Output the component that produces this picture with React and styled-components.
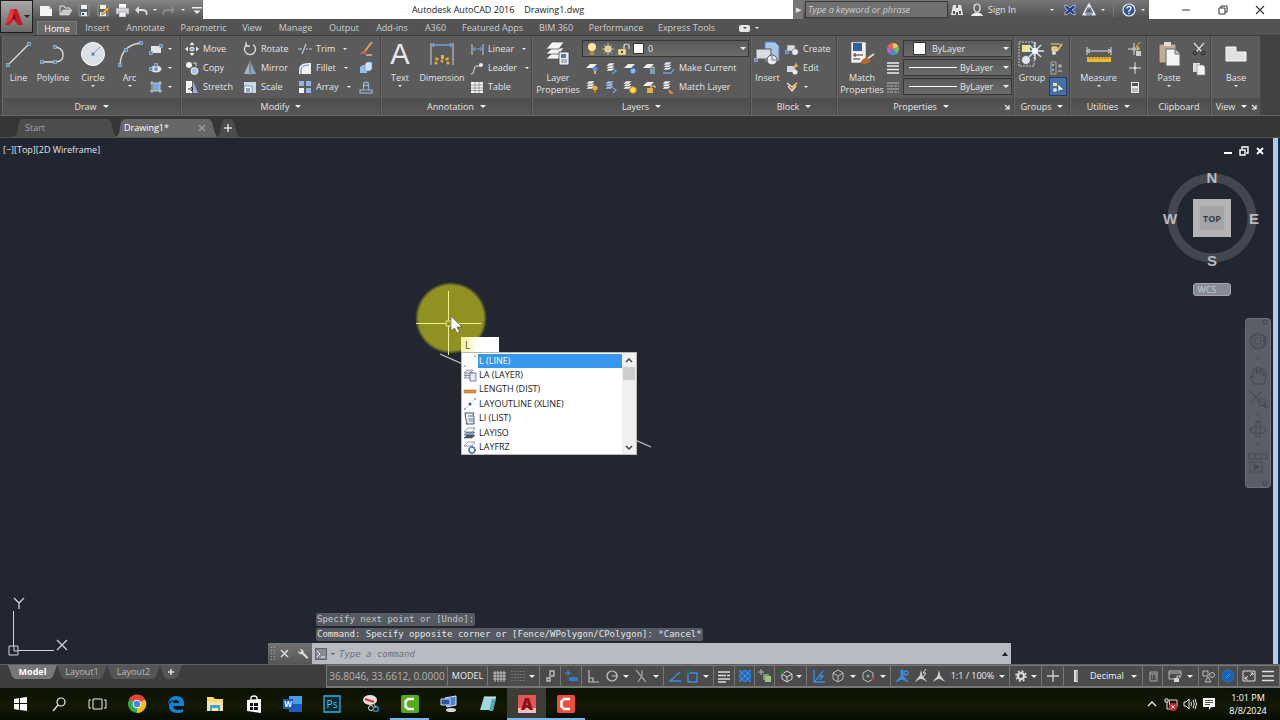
import styled, { createGlobalStyle, css } from "styled-components";

const ui = `"Open Sans", "Noto Sans", sans-serif`;
const mono = `"DejaVu Sans Mono", monospace`;

const GlobalStyle = createGlobalStyle`
    * {
        box-sizing: border-box;
    }

    body {
        margin: 0;
        background: #212631;
        font-family: ${ui};
        font-size: 10px;
        line-height: 12px;
        color: #e4e4e4;
        overflow: hidden;
    }

    button, input, select {
        font: inherit;
        color: inherit;
        border: 0;
        padding: 0;
        margin: 0;
        background: none;
        border-radius: 0;
    }

    svg {
        display: block;
        flex: none;
    }
`

const Page = styled.div`
    display: flex;
    flex-direction: column;
    height: 100vh;
`

/* ---------- icons ---------- */

const node = (x, y) => <rect x={x - 1.5} y={y - 1.5} width="3" height="3" fill="#5f7fb0" stroke="#9db9e2" strokeWidth=".7" />;
const sheets = (x, y, c = "#f2f2f2") => (
    <g fill={c} stroke="#4a4a4a" strokeWidth=".5">
        <path d={`M${x} ${y + 8}l3-3h6l-3 3z`} />
        <path d={`M${x} ${y + 5.5}l3-3h6l-3 3z`} />
        <path d={`M${x} ${y + 3}l3-3h6l-3 3z`} />
    </g>
);

const icons = {
    fresh: <><path d="M1 3h9l3 3v7H1z" fill="#f4f4f4" /><path d="M10 3v3h3" fill="#bbb" /></>,
    open: <><path d="M2 12V3h4l1 2h5v2" fill="none" stroke="#e4e4e4" /><path d="M2 12l3-5h9l-3 5z" fill="#c9c9c9" stroke="#eee" strokeWidth=".6" /></>,
    save: <><path d="M2 2h10v11H2z" fill="#59636e" stroke="#8d969f" /><path d="M4 2h6v4H4z" fill="#f2f2f2" /><path d="M4 9h6v4H4z" fill="#e4e6e8" /><path d="M5 10h2v2H5z" fill="#444" /></>,
    saveAs: <><path d="M2 2h10v11H2z" fill="#59636e" stroke="#8d969f" /><path d="M4 2h6v4H4z" fill="#f2f2f2" /><path d="M4 9h6v4H4z" fill="#e4e6e8" /><path d="M5 11l6-7 2 2-6 6z" fill="#f1b23b" stroke="#8b5a10" strokeWidth=".5" /></>,
    print: <><path d="M4 1h7v5H4z" fill="#fafafa" /><path d="M1 5h13v6H1z" fill="#d3d6da" stroke="#777" strokeWidth=".5" /><path d="M4 9h7v5H4z" fill="#f2f2f2" stroke="#777" strokeWidth=".5" /></>,
    undo: <path d="M5 3L1 7l4 4V8h4q3 0 3 4h1.500q.5-6-4.500-6H5z" fill="#dedede" />,
    redo: <path d="M9 3l4 4-4 4V8H5q-3 0-3 4H.500Q0 6 5 6h4z" fill="#8a8a8a" />,
    qat: <><path d="M2 4h10v1.500H2z" fill="#eee" /><path d="M3.500 7.500h7L7 11z" fill="#eee" /></>,
    binoc: <g fill="#e6e6e6"><path d="M3 2h3v3h2V2h3l2 10H8V9H6v3H1z" /><path d="M3 8h2v3H3zM9 8h2v3H9z" fill="#555" /></g>,
    person: <><ellipse cx="7" cy="5" rx="3" ry="4" fill="none" stroke="#f0f0f0" strokeWidth="1.200" /><path d="M1 13q1-3 5-3.500h2q4 .5 5 3.500z" fill="#f0f0f0" /></>,
    exchange: <><path d="M2 2q3 0 5 3 2-3 5-3v3L9 7l3 2v3q-3 0-5-3-2 3-5 3V9l3-2-3-2z" fill="#24418f" stroke="#bcc9ea" strokeWidth=".8" /></>,
    a360: <><path d="M7 2l5 9H2z" fill="none" stroke="#dfe5f5" strokeWidth="2.500" /><path d="M7 3l4 8H3z" fill="none" stroke="#31508f" strokeWidth="1" /><circle cx="7" cy="3" r="1.500" fill="#eee" /><circle cx="2.500" cy="11" r="1.500" fill="#eee" /><circle cx="11.500" cy="11" r="1.500" fill="#eee" /></>,
    help: <><circle cx="7" cy="7" r="6" fill="#2d5596" stroke="#eef" strokeWidth="1.200" /><path d="M5 5.500q0-2 2-2t2 1.800q0 1.200-2 2.400v1M7 9.700v1.300" fill="none" stroke="#fff" strokeWidth="1.300" /></>,
    min: <path d="M3 7h8" stroke="#333" />,
    restore: <><path d="M3 5h6v6H3z" fill="none" stroke="#333" /><path d="M5 5V3h6v6H9" fill="none" stroke="#333" /></>,
    close: <path d="M3 3l8 8M11 3l-8 8" stroke="#333" strokeWidth="1.100" />,

    line: <><path d="M3 24L24 3" stroke="#dcdcdc" strokeWidth="1.300" />{node(3, 24)}{node(24, 3)}</>,
    polyline: <><path d="M3 21h14q8-1 7-8t-9-7" fill="none" stroke="#dcdcdc" strokeWidth="1.300" />{node(3, 21)}{node(16, 21)}{node(16, 6)}</>,
    circle: <><circle cx="14" cy="13" r="11.500" fill="#dbe0e7" stroke="#fff" /><path d="M14 13l7-7" stroke="#6f9bd4" />{node(14, 13)}</>,
    arc: <><path d="M4 24Q5 4 25 2" fill="none" stroke="#dcdcdc" strokeWidth="1.300" />{node(4, 24)}{node(10, 9)}{node(25, 2)}</>,
    rect: <><path d="M2 4h10v7H2z" fill="#dfe3ea" />{node(2, 11)}{node(12, 4)}</>,
    ellipse: <><ellipse cx="7" cy="8" rx="5.500" ry="3.500" fill="#dfe3ea" />{node(7, 8)}{node(7, 4)}{node(2, 8)}</>,
    hatch: <><path d="M4 3h7v8H4z" fill="#7ea6dc" /><path d="M1 3h12M1 11h12M3 1v12M11 1v12" stroke="#d6dce6" strokeWidth=".8" /></>,

    move: <><path d="M7 0l2.500 3h-5zM7 14l2.500-3h-5zM0 7l3-2.500v5zM14 7l-3-2.500v5z" fill="#f0f0f0" /><circle cx="7" cy="7" r="2" fill="#7ea6dc" stroke="#eee" /></>,
    copy: <><circle cx="4" cy="4" r="3" fill="#f4f4f4" /><circle cx="9.500" cy="10" r="3.500" fill="#a9c4ea" stroke="#eee" /><path d="M8 2h3v3" stroke="#ddd" fill="none" /></>,
    stretch: <><path d="M1 1h6v12H1z" fill="#f6f6f6" /><path d="M8 1l5 12H8z" fill="#8fb0de" /><path d="M3 9h5M6 7l2 2-2 2" stroke="#222" fill="none" /></>,
    rotate: <path d="M10 2.500A5.500 5.500 0 1 1 4 2.500M3 0v4h4" fill="none" stroke="#dedede" strokeWidth="1.300" />,
    mirror: <><path d="M6 2v11H1z" fill="#a9b4c4" /><path d="M8 2v11h5z" fill="#7ea6dc" /><path d="M7 0v14" stroke="#eee" strokeWidth=".6" /></>,
    scale: <><path d="M1 2h12v11H1z" fill="#c9d8ee" /><path d="M1 6h8v7H1z" fill="#f4f4f4" stroke="#567" strokeWidth=".6" /><path d="M3 8h4v4H3z" fill="#7ea6dc" /></>,
    trim: <path d="M0 7h4M8 7h2m1 0h3M4 12L8 2" stroke="#b8cbe6" strokeWidth="1.200" />,
    fillet: <><path d="M1 13V9q0-7 9-7h3v11z" fill="#f1f1f1" /><path d="M3 13V9q0-5 8-5" stroke="#5a84c0" fill="none" /></>,
    array: <><path d="M1 1h5v5H1zM8 1h5v5H8z" fill="#8fb3e4" /><path d="M1 8h5v5H1z" fill="#f4f4f4" /><path d="M8 8h5v5H8z" fill="#8fb3e4" /></>,
    erase: <><path d="M13 0L6 9" stroke="#e9a35a" strokeWidth="2" /><path d="M1 12q4-5 6-3 1 2-2 3z" fill="#d95e42" /><path d="M7 13h6" stroke="#eee" /></>,
    explode: <><path d="M1 6l3-2h4v8H1z" fill="#9cbce8" /><path d="M6 3l2-2h5v7l-2 2H6z" fill="#cfdff5" stroke="#5a7fb8" strokeWidth=".6" /></>,
    offset: <path d="M1 13h12V10H9q2-8-2-8t-2 8H1zM6 10h2M5 6q2-2 4 0" fill="none" stroke="#9fc0ea" strokeWidth="1.100" />,

    text: <text x="14" y="23" fontSize="29" fontFamily="Liberation Sans" textAnchor="middle" fill="#e9e9e9">A</text>,
    dimension: <><path d="M3 2v22M25 2v22" stroke="#cfcfcf" /><path d="M3 4h22M6 2L4 4l2 2M22 2l2 2-2 2" stroke="#6f9ddb" fill="none" strokeWidth="1.300" /><g fill="#e9b13a"><path d="M13 14h3v4h-3zM8 16l3 2-2 2-2-2zM20 16l-3 2 2 2 2-2z" /><circle cx="8" cy="22" r="1.500" /><circle cx="14" cy="20" r="1.500" /><circle cx="20" cy="22" r="1.500" /></g></>,
    linear: <><path d="M2 2v11M13 2v11" stroke="#ccc" /><path d="M2 7h11M5 5L3 7l2 2M10 5l2 2-2 2" stroke="#6f9ddb" fill="none" /></>,
    leader: <><path d="M1 13q3 0 3-4t3-4h3" fill="none" stroke="#ddd" /><circle cx="11" cy="4" r="2" fill="#eee" /></>,
    table: <><path d="M1 2h12v11H1z" fill="#f4f4f4" /><path d="M1 5h12M1 8h12M1 10.500h12M5 2v11M9 2v11" stroke="#8a8a8a" strokeWidth=".8" /></>,

    layerProps: <><g fill="#f5f5f5" stroke="#4a4a4a" strokeWidth=".7"><path d="M2 18l6-6h12l-5 6z" /><path d="M2 13l6-6h12l-5 6z" /><path d="M2 8l6-7h12l-5 7z" /></g><path d="M15 11h10v13H15z" fill="#e8ecf4" stroke="#335" strokeWidth=".7" /><path d="M17 13h5v4h-5z" fill="#4679c4" /><path d="M17 19h6M17 21h6" stroke="#567" strokeWidth=".8" /></>,
    bulb: <><circle cx="7" cy="5" r="4" fill="#fbe9a0" /><path d="M5 9h4v4H5z" fill="#b98b3a" /></>,
    sun: <><circle cx="7" cy="7" r="3.500" fill="#e9dcae" /><path d="M7 1v12M1 7h12M3 3l8 8M11 3l-8 8" stroke="#d8c98e" strokeWidth=".9" /></>,
    lock: <><path d="M1 7h8v6H1z" fill="#f0dc9a" stroke="#77683a" strokeWidth=".5" /><path d="M7 7V4q0-2 2.500-2T12 4v3" fill="none" stroke="#ddd" strokeWidth="1.200" /><path d="M4 9h2v2H4z" fill="#444" /></>,
    lay1: <><path d="M1 7l4-4h7l-4 4z" fill="#eee" /><circle cx="10" cy="8" r="2.500" fill="#5c93dc" /><path d="M9 10h2v3H9z" fill="#e9b13a" /></>,
    lay2: <>{sheets(2, 2)}<path d="M9 8l3 2-4 3" stroke="#6aa0e6" fill="none" strokeWidth="1.300" /></>,
    lay3: <><path d="M1 7l4-4h7l-4 4z" fill="#eee" /><circle cx="10" cy="10" r="3" fill="#8bb8ef" stroke="#3b6cb0" /></>,
    lay4: <><path d="M1 7l4-4h7l-4 4z" fill="#eee" /><path d="M8 8h5v5H8z" fill="#6fa3b4" /><path d="M9 8V6h3v2" stroke="#ccc" fill="none" /></>,
    lay5: <>{sheets(2, 1, "#dbe7fa")}<path d="M2 12h8l3-4" stroke="#6aa0e6" fill="none" strokeWidth="1.300" /></>,
    lay6: <>{sheets(1, 1)}<circle cx="10" cy="8" r="2.500" fill="#f2ad3b" /><path d="M9 10h2v3H9z" fill="#c07c22" /></>,
    lay7: <>{sheets(1, 1, "#a9c4ea")}<path d="M9 8l3 2-3 3" stroke="#6aa0e6" fill="none" strokeWidth="1.300" /></>,
    lay8: <>{sheets(0, 1)}<circle cx="10" cy="10" r="3.300" fill="#f6dc55" stroke="#c79a20" /></>,
    lay9: <><path d="M1 6l4-4h7l-4 4z" fill="#eee" /><path d="M5 8h6v5H5z" fill="#e9b13a" /><path d="M9 8V6h4v2" stroke="#f5d690" fill="none" /></>,
    lay10: <>{sheets(1, 1)}<path d="M7 9l6 4-4 1z" fill="#e88a3a" /></>,

    insert: <><path d="M11 1h10l4 4v15H11z" fill="#a9c6ee" stroke="#5b7fb3" /><path d="M2 8h15v10H2z" fill="#d9dde3" stroke="#555" /><circle cx="18" cy="19" r="5" fill="#e7eaee" stroke="#555" /><path d="M18 19v-4M18 19h4" stroke="#557" strokeWidth=".8" />{node(2, 19)}</>,
    create: <><path d="M2 3h8v6H2z" fill="#d9dde3" stroke="#555" strokeWidth=".5" /><circle cx="10" cy="10" r="3.300" fill="#e7eaee" stroke="#555" strokeWidth=".5" />{node(2, 10)}</>,
    edit: <><path d="M2 5h8v6H2z" fill="#cfd8e6" /><circle cx="10" cy="11" r="2.500" fill="#e7eaee" /><path d="M7 6l3-2 1-3 1 3 2 1-3 1-1 2z" fill="#f1b23b" /></>,
    attr: <><path d="M2 3l5 4 5-4M3 6l4 5 4-5" fill="none" stroke="#f0e6d0" strokeWidth="1.300" /><path d="M6 10l6-7" stroke="#e9b13a" strokeWidth="1.300" /></>,

    match: <><path d="M3 1h15v21H3z" fill="#f4f4f4" stroke="#666" strokeWidth=".7" /><path d="M5 2h9v8H5z" fill="#315f9f" /><path d="M5 14h10M7 12v4M5 18h7" stroke="#333" /><path d="M26 13l-7 5" stroke="#ead7b8" strokeWidth="2" /><path d="M12 22q4-6 7-5t4 3q-4 5-11 2z" fill="#b5662a" /></>,
    wheel: <><path d="M7 7V1a6 6 0 0 1 5.500 4z" fill="#e7d04d" /><path d="M7 7l5.500-2a6 6 0 0 1-2 7z" fill="#6cbf5a" /><path d="M7 7l3.500 5a6 6 0 0 1-7 0z" fill="#4f86dd" /><path d="M7 7l-3.500 5a6 6 0 0 1-2-7z" fill="#b06acb" /><path d="M7 7L1.500 5A6 6 0 0 1 7 1z" fill="#ef6650" /></>,
    weight: <path d="M1 2h12M1 5h12M1 8.500h12M1 12h12" stroke="#eee" strokeWidth="1.600" />,
    ltype: <path d="M1 3h12M1 6h2m1 0h3m1 0h3m1 0h1M1 9h12M1 12h2m1 0h3m1 0h3m1 0h1" stroke="#bbb" />,

    group: <><path d="M1 1h15v24H1z" fill="none" stroke="#ccc" strokeDasharray="2 1" /><path d="M4 4h8v7H4z" fill="#efe28a" /><circle cx="8" cy="19" r="4.500" fill="#dfe6f0" stroke="#567" /><path d="M17 1v18M8 10h18M11 4l12 12M23 4L11 16" stroke="#cfe6ff" strokeWidth="1.500" /><circle cx="17" cy="10" r="3" fill="#fff" /></>,
    ungroup: <><path d="M2 2h9M3 5h5v4H3z" stroke="#efe28a" fill="#d8c96a" /><path d="M13 2L8 9" stroke="#e8c46b" strokeWidth="1.500" /><circle cx="5" cy="11" r="2" fill="#ddd" /></>,
    groupEdit: <><path d="M2 1h5v12H2z" fill="none" stroke="#aaa" /><path d="M3 3h2v2H3zM3 8h2v2H3z" fill="#8fb3e4" /><path d="M9 5h4M11 3v4M9 10h4" stroke="#ccc" /></>,
    groupSel: <><path d="M2 3h4v3H2z" fill="#efe28a" /><circle cx="4" cy="10" r="2" fill="#ddd" /><path d="M7 4l6 6H9l-2 2z" fill="#fff" stroke="#333" strokeWidth=".5" /></>,
    measure: <><path d="M2 6v8M26 6v8M2 10h24M5 8l-3 2 3 2M23 8l3 2-3 2" fill="none" stroke="#ddd" /><path d="M2 16h24v5H2z" fill="#efbb2e" /><path d="M5 16v2m3-2v2m3-2v2m3-2v2m3-2v2m3-2v2m3-2v2" stroke="#8a6a12" /></>,
    quick: <><path d="M6 1v12M0 7h12" stroke="#ddd" /><circle cx="6" cy="7" r="2" fill="#bbb" /><path d="M12 0L8 5h3L9 9" stroke="#f1c232" fill="none" /><path d="M8 9h5v5H8z" fill="#ccc" /></>,
    point: <><path d="M7 1v12M1 7h12" stroke="#ddd" /><circle cx="7" cy="7" r="1.500" fill="#ddd" /></>,
    calc: <><path d="M3 2h8v11H3z" fill="#e6e6e6" /><path d="M4 3h6v3H4z" fill="#555" /><path d="M5 8v4M7 8v4M9 8v4" stroke="#888" /></>,
    paste: <><path d="M4 3h17v19H4z" fill="#bfae96" stroke="#5b5043" /><path d="M9 1h7v4H9z" fill="#ddd" /><path d="M11 8h9l5 5v12H11z" fill="#f3f3f3" stroke="#666" /><path d="M20 8v5h5" fill="#ccc" stroke="#666" /></>,
    cut: <><path d="M2 1l8 9M12 1L4 10" stroke="#ddd" strokeWidth="1.200" /><circle cx="3" cy="11" r="1.800" fill="none" stroke="#222" /><circle cx="11" cy="11" r="1.800" fill="none" stroke="#222" /></>,
    copyClip: <><path d="M1 2h7v9H1z" fill="#dcdcdc" /><path d="M5 4h6l2 2v8H5z" fill="#f4f4f4" stroke="#777" strokeWidth=".5" /></>,
    base: <path d="M4 6h10v5h10v9H4z" fill="#dfe1e4" stroke="#fafafa" />,
    corner: <path d="M5 5l4 4M9 5v4H5" stroke="#eee" fill="none" strokeWidth="1.200" />,

    layer: <>{sheets(1, 2, "#dce4f2")}<path d="M7 5h6v8H7z" fill="#e6ecf6" stroke="#456" strokeWidth=".7" /></>,
    dist: <path d="M1 8h12v3H1z" fill="#e0912f" stroke="#a8641a" strokeWidth=".5" />,
    pt: <path d="M1 11h2v2H1zM11 1h2v2h-2z" fill="#b9cbe6" />,
    xline: <><path d="M3 11l8-8" stroke="#9db9e2" strokeDasharray="1 1" /><path d="M1 11h2v2H1zM11 1h2v2h-2z" fill="#9db4d6" /><circle cx="7" cy="7" r="1.500" fill="#245fb8" /></>,
    list: <><path d="M2 2h9q-2 2 0 4v7H3q2-2 0-4z" fill="#eef2f8" stroke="#456" /><path d="M5 5h5M5 8h5M6 10h4" stroke="#456" strokeWidth=".8" /></>,
    layiso: <g stroke="#456" strokeWidth=".6"><path d="M1 12l3-3h8l-3 3z" fill="#456" /><path d="M1 9l3-3h8l-3 3z" fill="#8fa8cc" /><path d="M1 6l4-4h7L9 6z" fill="#fff" /></g>,
    layfrz: <><path d="M1 6l4-4h7L9 6z" fill="#fff" stroke="#456" strokeWidth=".6" /><circle cx="9" cy="10" r="3" fill="#fff" stroke="#2f5f98" strokeWidth="1.800" strokeDasharray="1.500 .4" /></>,

    sGrid: <path d="M3 2v11M6 2v11M9 2v11M12 2v11M1 4h13M1 7h13M1 10h13" stroke="#cfcfcf" strokeWidth=".9" />,
    sDots: <path d="M2 2v12M5 2v12M8 2v12M11 2v12M14 2v12" stroke="#9a9a9a" strokeDasharray="1 2" />,
    sNote: <path d="M7 12V2h4v5H8M4 12h3V9H4z" fill="none" stroke="#bdbdbd" strokeWidth="1.400" />,
    sDyn: <><path d="M4 1v6M1 4h6" stroke="#3d8eea" /><path d="M5 8h9v4H5z" fill="#2f7bd0" /></>,
    sOrtho: <path d="M3 1v12h10M3 9h4v4" fill="none" stroke="#bdbdbd" strokeWidth="1.200" />,
    sPolar: <><circle cx="7" cy="7" r="5" fill="none" stroke="#c8c8c8" strokeWidth="1.200" /><path d="M7 7h6" stroke="#c8c8c8" /></>,
    sIso: <path d="M2 1l10 12M8 7L4 13M8 7V1" stroke="#a5a5a5" strokeWidth="1.200" />,
    sTrack: <path d="M1 12h12M2 12L12 3" stroke="#3d8eea" strokeWidth="1.300" />,
    sSnap: <><path d="M3 4h9v9H3z" fill="none" stroke="#3d8eea" strokeWidth="1.400" /><circle cx="3" cy="3" r="2" fill="#1b7a32" /></>,
    sLines: <path d="M1 3h12M1 6.500h8M10 6.500h3M1 10h12M1 13h8" stroke="#ddd" strokeWidth="1.500" />,
    sHatch: <><path d="M1 1h12v12H1z" fill="#2868b4" /><path d="M1 1l12 12M13 1L1 13M7 1l6 6M1 7l6 6M7 1L1 7M13 7l-6 6" stroke="#4d97ec" strokeWidth=".8" /></>,
    sCycle: <><path d="M5 5h6v6H5z" fill="#7d9c68" /><path d="M7 7h6v6H7z" fill="#9cc284" /><path d="M3 0v6M0 3h6" stroke="#bbb" /></>,
    sCube: <path d="M7 1l5 3v6l-5 3-5-3V4zM2 4l5 3 5-3M7 7v6" fill="none" stroke="#bdbdbd" />,
    sCubeG: <><path d="M8 2l5 3v5l-5 3-5-3V5zM3 5l5 3 5-3M8 8v5" fill="none" stroke="#d6d6d6" /><circle cx="3" cy="3" r="2.200" fill="#1b7a32" /></>,
    sUcs: <path d="M2 1v12h11M2 13l5-5M11 2L7 7h4l-3 4" fill="none" stroke="#3d8eea" strokeWidth="1.300" />,
    sFilter: <><path d="M7 1l5 3v6l-5 3-5-3V4z" fill="none" stroke="#bdbdbd" /><circle cx="7" cy="7" r="1.500" fill="#7aa" /><circle cx="12" cy="10" r="1.500" fill="#b33" /></>,
    sMan1: <><path d="M6 1h2v6l5 6-6-3-6 3 5-6z" fill="#3d8eea" stroke="#3d8eea" strokeWidth=".8" /><circle cx="11" cy="4" r="2" fill="none" stroke="#3d8eea" strokeWidth="1.300" /></>,
    sMan: <path d="M7 1l1.500 6 5 6-5.500-3H6L.5 13l5-6z" fill="#cfcfcf" />,
    sMan2: <><path d="M7 1l1.500 6 5 6-5.500-3H6L.5 13l5-6z" fill="#cfcfcf" /><path d="M12 0l-3 4h3L9 8" stroke="#ddd" fill="none" /></>,
    sGear: <><circle cx="7" cy="7" r="3" fill="none" stroke="#ddd" strokeWidth="2.200" /><circle cx="7" cy="7" r="5" fill="none" stroke="#ddd" strokeWidth="1.500" strokeDasharray="2 1.930" /></>,
    sPlus: <path d="M7 1v12M1 7h12" stroke="#d0d0d0" strokeWidth="1.300" />,
    sUnits: <><path d="M5 1h4v12H5z" fill="#ddd" /><path d="M7 3h2M7 5h2M7 7h2M7 9h2M7 11h2" stroke="#555" strokeWidth=".8" /></>,
    sProps: <path d="M4 3h7v9H4zM4 5h7M6 7h1m2 0h1M6 9h1m2 0h1" fill="none" stroke="#aaa" />,
    sLock: <><path d="M6 10H1V2h12v5M1 4h12" fill="none" stroke="#bbb" /><path d="M6 9h5v4H6z" fill="#d6d6d6" /><path d="M9 9V7h3v2" fill="none" stroke="#d6d6d6" /></>,
    sIsolate: <><path d="M1 2h5v5H1z" fill="none" stroke="#bbb" /><circle cx="10" cy="6" r="2.500" fill="none" stroke="#bbb" /><path d="M6 8l3 5H3z" fill="none" stroke="#bbb" /></>,
    sPerf: <><circle cx="7" cy="7" r="6" fill="#1764b5" stroke="#2176cc" /><path d="M5 9l4-4" stroke="#4fa3f5" /></>,
    sFull: <path d="M1 2h12v10H1zM8 7l3-3M8.500 4H11v2.500M6 7l-3 3M3 7.500V10h2.500" fill="none" stroke="#ddd" />,
    sMenu: <path d="M1 2.500h12M1 7h12M1 11.500h12" stroke="#ddd" strokeWidth="1.500" />,
};

const Svg = styled.svg`
    width: ${({ $size }) => $size}px;
    height: ${({ $size }) => $size}px;
    overflow: visible;
`

function Icon({ name, big }) {
    const box = big ? 28 : 14;
    return <Svg $size={box} viewBox={`0 0 ${box} ${box}`} aria-hidden="true">{icons[name]}</Svg>;
}

const Caret = styled.span`
    flex: none;
    width: 0;
    height: 0;
    border: ${({ $s = 3 }) => $s}px solid transparent;
    border-bottom-width: 0;
    border-top-color: ${({ $c = "#eee" }) => $c};
`

/* ---------- title bar ---------- */

const Header = styled.header`
    display: grid;
    grid-template-columns: 33px 1fr;
    grid-template-rows: 19px 17px;
    flex: none;
    background: #535353;
`

const AppButton = styled.button`
    grid-row: 1 / 3;
    height: 33px;
    display: flex;
    align-items: center;
    justify-content: center;
    border: 1px solid #1d1d1d;
    background: linear-gradient(#a8a8a8, #6a6a6a);
`

const TitleRow = styled.div`
    display: flex;
    background: #fff;
`

const QuickAccess = styled.div`
    display: flex;
    align-items: center;
    gap: 5px;
    width: 170px;
    padding-left: 6px;
    background: linear-gradient(#858585, #555);
`

const Title = styled.h1`
    flex: 1;
    display: flex;
    gap: 10px;
    justify-content: center;
    align-items: center;
    margin: 0;
    color: #222;
    font-size: 9px;
    font-weight: 400;
`

const InfoCenter = styled.div`
    display: flex;
    align-items: center;
    width: 356px;
    gap: 2px;
    padding-right: 4px;
    background: linear-gradient(#777, #505050);
    font-size: 9px;
`

const InfoLinks = styled.div`
    display: flex;
    align-items: center;
    gap: 5px;
`

const Divider = styled.span`
    width: 1px;
    height: 14px;
    margin: 0 3px;
    background: #777;
`

const SearchArrow = styled.button`
    width: 10px;
    height: 19px;
    background: #777;
    font-size: 7px;
`

const Search = styled.input`
    width: 143px;
    height: 17px;
    padding: 0 2px;
    border: 1px solid #383838;
    background: #707070;
    font-style: italic;

    &::placeholder {
        color: #cfcfcf;
        opacity: 1;
    }
`

const SignIn = styled.button`
    display: flex;
    align-items: center;
    gap: 4px;
    flex: 1;
    padding: 0 7px 0 4px;

    ${Caret} {
        margin-left: auto;
    }
`

const WindowButtons = styled.div`
    display: flex;
    width: 131px;
    gap: 23px;
    padding-right: 13px;
    justify-content: flex-end;
    align-items: center;
`

const IconButton = styled.button`
    display: flex;
    align-items: center;
    justify-content: center;
    flex: none;
`

const Menu = styled.nav`
    display: flex;
    padding: 2px 0 0 4px;
    align-items: stretch;
    border-bottom: 1px solid #3c3c3c;
`

const MenuTab = styled.button`
    width: ${({ $w }) => $w}px;
    font-size: 9px;
    color: #cdcdcd;

    ${({ $on }) => $on && css`
        background: #686868;
        color: #fff;
        border: 1px solid #7c7c7c;
        border-bottom: 0;
    `}
`

const MenuEnd = styled.button`
    display: flex;
    align-items: center;
    gap: 5px;
    margin-left: 17px;
`

const Pill = styled.span`
    display: flex;
    justify-content: center;
    align-items: center;
    width: 11px;
    height: 7px;
    border-radius: 2px;
    background: #e6e6e6;
`

/* ---------- ribbon ---------- */

const Ribbon = styled.div`
    display: flex;
    flex: none;
    height: 80px;
    padding-left: 2px;
    background: #424242;
    border-bottom: 1px solid #666;
`

const PanelBox = styled.section`
    display: flex;
    flex-direction: column;
    width: ${({ $w }) => $w}px;
    flex: none;
    background: #5b5b5b;
    border-right: 1px solid #474747;
    border-left: 1px solid #686868;
`

const Tools = styled.div`
    display: flex;
    flex: 1;
    padding: 3px 1px 0;
`

const PanelFooter = styled.button`
    position: relative;
    display: flex;
    align-items: center;
    justify-content: center;
    gap: 6px;
    height: 17px;
    padding-right: ${({ $launch }) => ($launch ? 9 : 0)}px;
    background: linear-gradient(#4e4e4e, #575757);
    font-size: 9px;

    svg {
        position: absolute;
        right: -1px;
    }
`

const BigTool = styled.button`
    display: flex;
    flex-direction: column;
    align-items: center;
    width: ${({ $w }) => $w}px;
    flex: none;
    padding-top: 2px;
    font-size: 9px;
    white-space: pre-line;

    svg {
        margin-bottom: 3px;
    }

    ${Caret} {
        margin-top: 1px;
    }
`

const Column = styled.div`
    display: flex;
    flex-direction: column;
    width: ${({ $w }) => $w}px;
    flex: ${({ $grow }) => ($grow ? "1" : "none")};
    padding-left: ${({ $pad = 0 }) => $pad}px;
`

const SmallTool = styled.button`
    display: flex;
    align-items: center;
    gap: 4px;
    height: 19px;
    font-size: 9px;
    white-space: nowrap;

    ${Caret} {
        margin-left: ${({ $label }) => ($label ? 4 : 1)}px;
    }

    ${({ $active }) => $active && css`
        width: 18px;
        padding-left: 1px;
        background: #4470ad;
        border: 1px solid #243c60;
    `}
`

const ToolRow = styled.div`
    display: flex;
    align-items: center;
    gap: ${({ $gap = 5 }) => $gap}px;
    height: 19px;
    padding-left: ${({ $pad = 0 }) => $pad}px;
`

const ComboBox = styled.label`
    display: flex;
    align-items: center;
    flex: 1;
    min-width: 0;
    gap: 2px;
    height: 17px;
    padding: 0 2px 0 ${({ $pad = 2 }) => $pad}px;
    border: 1px solid #353535;
    background: linear-gradient(#5a5a5a, #6b6b6b);

    select {
        flex: 1;
        min-width: 0;
        padding-left: ${({ $inset = 2 }) => $inset}px;
        appearance: none;
        font-size: 9px;
        outline: 0;
    }
`

const Swatch = styled.span`
    flex: none;
    width: ${({ $w = 11 }) => $w}px;
    height: ${({ $h = 11 }) => $h}px;
    background: #fff;
    border: ${({ $h = 11 }) => ($h > 1 ? "1px solid #333" : "0")};
`

function Panel({ w, title, menu = true, launch, children }) {
    return (
        <PanelBox $w={w}>
            <Tools>{children}</Tools>
            <PanelFooter $launch={launch}>
                {title}
                {menu && <Caret />}
                {launch && <Icon name="corner" />}
            </PanelFooter>
        </PanelBox>
    )
}

function Big({ w, icon, label, menu }) {
    return (
        <BigTool $w={w}>
            <Icon name={icon} big />
            {label}
            {menu && <Caret $s={2} />}
        </BigTool>
    )
}

function Small({ icon, label, menu, active }) {
    return (
        <SmallTool $active={active} $label={label} aria-label={label || icon}>
            <Icon name={icon} />
            {label}
            {menu && <Caret $s={2} />}
        </SmallTool>
    )
}

function Combo({ label, options, swatch, pad, inset, lead }) {
    return (
        <ComboBox $pad={pad} $inset={inset}>
            {lead}
            {swatch && <Swatch $w={swatch[0]} $h={swatch[1]} />}
            <select aria-label={label}>
                {options.map((o) => <option key={o}>{o}</option>)}
            </select>
            <Caret />
        </ComboBox>
    )
}

/* ---------- file tabs ---------- */

const FileTabs = styled.div`
    display: flex;
    align-items: flex-end;
    flex: none;
    height: 22px;
    padding-left: 14px;
    background: #363636;
    border-bottom: 1px solid #555;
`

const FileTab = styled.button`
    display: flex;
    align-items: center;
    justify-content: space-between;
    width: ${({ $w }) => $w}px;
    height: 18px;
    padding: 0 11px 0 ${({ $pad = 11 }) => $pad}px;
    font-size: 9px;
    color: ${({ $on }) => ($on ? "#fff" : "#a6a6a6")};
    background: ${({ $on }) => ($on ? "#676767" : "#4c4c4c")};
    clip-path: polygon(0 100%, 3px 80%, 5px 15%, 8px 0, calc(100% - 8px) 0, calc(100% - 5px) 15%, calc(100% - 2px) 80%, 100% 100%);
`

/* ---------- drawing area ---------- */

const Workspace = styled.main`
    display: flex;
    flex: 1;
    min-height: 0;
    background: #212631;
    border-right: 2px solid #17324f;
`

const Canvas = styled.div`
    position: relative;
    flex: 1;
    overflow: hidden;
`

const Edge = styled.div`
    width: 5px;
    background: #b5cae6;
`

const ViewBar = styled.div`
    display: flex;
    justify-content: space-between;
    padding: 6px 6px 0 3px;
    font-size: 9px;

    div {
        display: flex;
        gap: 2px;
    }
`

const Drawing = styled.svg`
    position: absolute;
    left: ${({ $x }) => $x}px;
    top: ${({ $y }) => $y}px;
`

const Ucs = styled.svg`
    position: absolute;
    left: 8px;
    bottom: 3px;
`

const Compass = styled.svg`
    position: absolute;
    right: 12px;
    top: 28px;
`

const Wcs = styled.button`
    position: absolute;
    right: 42px;
    top: 145px;
    width: 38px;
    height: 13px;
    padding-right: 10px;
    border: 1px solid #a2a4ae;
    border-radius: 3px;
    background: #868996;
    color: #c8cad2;
    font-size: 9px;
    line-height: 10px;
`

const NavBar = styled.svg`
    position: absolute;
    right: 2px;
    top: 180px;
`

const DynamicInput = styled.input`
    position: absolute;
    left: 461px;
    top: 199px;
    width: 38px;
    height: 15px;
    padding-left: 4px;
    background: linear-gradient(100deg, #f4f3a0 10%, #fff 45%);
    color: #555;
`

const Suggest = styled.div`
    position: absolute;
    left: 461px;
    top: 214px;
    display: flex;
    width: 176px;
    height: 103px;
    border: 1px solid #b9b9b9;
    background: #fff;
    color: #333;
`

const Options = styled.ul`
    flex: 1;
    margin: 0;
    padding: 0;
    list-style: none;
`

const Option = styled.li`
    display: flex;
    align-items: center;
    height: ${({ $on }) => ($on ? 15 : 14)}px;
    margin-bottom: ${({ $even }) => ($even ? 1 : 0)}px;
    padding-left: 1px;
    font-size: 9px;

    span {
        flex: 1;
        margin-left: 1px;
        padding-left: 1px;
        line-height: 14px;
        background: ${({ $on }) => ($on ? "#3697ee" : "none")};
        color: ${({ $on }) => ($on ? "#fff" : "#222")};
    }
`

const ScrollTrack = styled.div`
    display: flex;
    flex-direction: column;
    align-items: center;
    width: 14px;
    background: #f0f0f0;

    i {
        width: 12px;
        height: 13px;
        background: #cdcdcd;
    }

    svg:last-child {
        margin-top: auto;
    }
`

const CommandArea = styled.div`
    position: absolute;
    left: 268px;
    right: 262px;
    bottom: 0;
    display: flex;
    flex-direction: column;
    align-items: flex-start;
    gap: 2px;
    font-family: ${mono};
    font-size: 9px;
`

const History = styled.output`
    margin-left: 48px;
    padding: 0 1px;
    line-height: 13px;
    border-radius: 2px;
    background: #555962;
    color: ${({ $old }) => ($old ? "#c3c5c9" : "#e6e6e6")};
`

const CommandLine = styled.form`
    display: flex;
    align-items: stretch;
    align-self: stretch;
    height: 21px;
    background: linear-gradient(#747474, #555);

    > button {
        width: 18px;
    }
`

const Grip = styled.span`
    width: 6px;
    margin: 3px 0 3px 2px;
    background-image: radial-gradient(#aaa 1px, transparent 1px);
    background-size: 3px 3px;
`

const Prompt = styled.label`
    display: flex;
    align-items: center;
    flex: 1;
    gap: 4px;
    padding: 0 3px;
    background: #b9bbc2;

    input {
        flex: 1;
        font-style: italic;
        outline: 0;
    }

    input::placeholder {
        color: #6e7078;
        opacity: 1;
    }
`

/* ---------- status bar ---------- */

const StatusBar = styled.footer`
    display: flex;
    justify-content: space-between;
    flex: none;
    height: 24px;
    background: #3d3d3d;
    border-top: 1px solid #606060;
`

const LayoutTabs = styled.div`
    display: flex;
    padding-left: 8px;
`

const LayoutTab = styled.button`
    width: ${({ $w }) => $w}px;
    height: 14px;
    font-size: 9px;
    font-weight: ${({ $on }) => ($on ? 700 : 400)};
    color: ${({ $on }) => ($on ? "#fff" : "#bbb")};
    background: ${({ $on }) => ($on ? "#777" : "#555")};
    clip-path: polygon(0 0, 100% 0, calc(100% - 4px) 80%, calc(100% - 7px) 100%, 7px 100%, 4px 80%);

    svg {
        margin: 0 auto;
    }
`

const StatusTools = styled.div`
    display: flex;
    border-bottom: 2px solid #777;
    background: #4b4b4b;
    border-left: 1px solid #777;
    border-top: 1px solid #777;
`

const Cell = styled.div`
    display: flex;
    align-items: center;
    justify-content: space-around;
    width: ${({ $w }) => $w}px;
    padding: 0 2px;
    border-right: 1px solid #767676;
    color: ${({ $dim }) => ($dim ? "#b2b2b2" : "#efefef")};
    font-size: ${({ $size = 9 }) => $size}px;
    white-space: nowrap;
`

/* each cell: width, then its icons; "v" is a drop-down caret */
const cells = [
    [52, "sGrid", "sDots", "v"],
    [21, "sNote"],
    [21, "sDyn"],
    [82, "sOrtho", "sPolar", "v", "sIso", "v"],
    [50, "sTrack", "sSnap", "v"],
    [21, "sLines"],
    [20, "sHatch"],
    [20, "sCycle"],
    [32, "sCubeG", "v"],
    [84, "sUcs", "sCube", "v", "sFilter", "v"],
    [119, "sMan1", "sMan2", "sMan", "1:1 / 100%", "v"],
    [32, "sGear", "v"],
    [22, "sPlus"],
    [79, "sUnits", "Decimal", "v"],
    [20, "sProps"],
    [36, "sLock", "v"],
    [20, "sIsolate"],
    [19, "sPerf"],
    [42, "sFull", "sMenu"],
];

function StatusCell({ cell: [w, ...parts] }) {
    return (
        <Cell $w={w}>
            {parts.map((p, i) => (
                p === "v" ? <Caret key={i} /> : icons[p]
                    ? <IconButton key={i} aria-label={p.slice(1)}><Icon name={p} /></IconButton>
                    : <span key={i}>{p}</span>
            ))}
        </Cell>
    )
}

/* ---------- taskbar ---------- */

const Taskbar = styled.footer`
    display: flex;
    flex: none;
    height: 32px;
    background: linear-gradient(#0c1204, #131903 60%, #070b03);
`

const Task = styled.button`
    display: flex;
    align-items: center;
    justify-content: center;
    width: 39px;
    border-bottom: 2px solid ${({ $open }) => ($open ? "#7db7e8" : "transparent")};
    background: ${({ $on }) => ($on ? "#3c3d36" : "none")};
`

const Tray = styled.div`
    display: flex;
    align-items: center;
    gap: 5px;
    margin-left: auto;
    padding-right: 11px;
`

const Clock = styled.time`
    width: 42px;
    margin-left: 6px;
    text-align: center;
    font-size: 9px;
    line-height: 13px;
    color: #fff;
`

const TaskSvg = styled.svg`
    width: 20px;
    height: 20px;
    margin-top: 2px;
`

const tasks = [
    { name: "Start", art: <path d="M4 5l5-1v5H4zM10 4l7-1v6h-7zM4 10h5v6l-5-1zM10 10h7v7l-7-1z" fill="#fff" /> },
    { name: "Search", art: <><circle cx="12" cy="8" r="4" fill="none" stroke="#eee" strokeWidth="1.200" /><path d="M9 11l-5 6" stroke="#eee" strokeWidth="1.200" /></> },
    { name: "Task View", art: <path d="M5 5h9v10H5zM3 6H1v8h2M16 6h2v8h-2" fill="none" stroke="#eee" /> },
    { name: "Chrome", art: <><circle cx="10" cy="10" r="9" fill="#34a853" /><path d="M10 10L2 5.500A9 9 0 0 1 18 5.500z" fill="#ea4335" /><path d="M10 10l8-4.500A9 9 0 0 1 10 19z" fill="#fbbc05" /><circle cx="10" cy="10" r="4.300" fill="#fff" /><circle cx="10" cy="10" r="3.300" fill="#4285f4" /></> },
    { name: "Edge", art: <path d="M2 9Q4 2 10 2q8 0 8 8v2H7q1 4 5 4 3 0 5-1v3q-2 1-6 1-8 0-8-7 0-4 5-6-5 0-6 5zM7 9h6q0-3-3-3T7 9z" fill="#1382d8" /> },
    { name: "Explorer", art: <><path d="M2 3h6l2 2h8v12H2z" fill="#f7d978" /><path d="M2 8h16v9H2z" fill="#fbe7a2" /><path d="M5 11h10v6h-2v-3H7v3H5z" fill="#35a7d8" /></> },
    { name: "Store", art: <><path d="M3 6l14-1v14L3 17z" fill="#fff" /><path d="M7 6V4q0-2 3-2t3 2v2" stroke="#fff" fill="none" strokeWidth="1.300" /><path d="M6 9h3v3H6zM10 9h4v3h-4zM6 13h3v3H6zM10 13h4v3h-4z" fill="#111" /></> },
    { name: "Word", art: <><path d="M6 2h13v16H6z" fill="#4a9ce8" /><path d="M6 10h13v8H6z" fill="#1b5ebe" /><path d="M0 5h10v10H0z" fill="#185abd" /><text x="5" y="13" fontSize="8" fontWeight="700" textAnchor="middle" fill="#fff">W</text></> },
    { name: "Photoshop", art: <><path d="M2 2h16v16H2z" fill="#0a2733" stroke="#2bb7dd" strokeWidth="1.300" /><text x="10" y="14" fontSize="10" textAnchor="middle" fill="#3fd0f5">Ps</text></> },
    { name: "Snipping Tool", art: <><ellipse cx="9" cy="6" rx="7" ry="5" fill="#eadfdc" /><path d="M4 5l9 3" stroke="#c0392b" strokeWidth="2" /><circle cx="10" cy="14" r="2.500" fill="none" stroke="#ddd" /><circle cx="15" cy="15" r="2.500" fill="none" stroke="#3e83c8" strokeWidth="1.300" /><path d="M12 8l3 6" stroke="#bbb" /></> },
    { name: "Camtasia", open: true, art: <><rect x="1" y="1" width="18" height="18" rx="2" fill="#59a818" /><path d="M14 5H8L5.500 7.500v5L8 15h6" fill="none" stroke="#fff" strokeWidth="2.500" /></> },
    { name: "Remote Desktop", art: <><path d="M6 4l11-2v9l-9 2z" fill="#4c7fd0" stroke="#dfe8f6" /><path d="M2 5h9v6H2z" fill="#2d55a5" stroke="#cdd9f0" /><ellipse cx="12" cy="16" rx="5" ry="2" fill="#d5dae2" /></> },
    { name: "Notes", art: <><path d="M6 3h12l-3 13H2z" fill="#9ed8e0" /><path d="M14 5l4 0-3 12h-4z" fill="#5aa5b2" /><path d="M6 3h12" stroke="#eee" /></> },
    { name: "AutoCAD", open: true, on: true, art: <><path d="M1 1h18v18H1z" fill="#e25555" /><path d="M1 14h18v5H1z" fill="#f3bcbc" /><path d="M4 16l4-12h4l4 12h-3l-3-3-3 3zM10 7l-1 4h2z" fill="#8d1014" fillRule="evenodd" /></> },
    { name: "Recorder", open: true, art: <><rect x="1" y="1" width="18" height="18" rx="2" fill="#e8503e" /><path d="M14 5H8L5.500 7.500v5L8 15h6" fill="none" stroke="#fff" strokeWidth="2.500" /></> },
];

const menu = [
    ["Home", 40], ["Insert", 41], ["Annotate", 55], ["Parametric", 61], ["View", 36], ["Manage", 51], ["Output", 46],
    ["Add-ins", 50], ["A360", 37], ["Featured Apps", 77], ["BIM 360", 50], ["Performance", 70], ["Express Tools", 71],
];

const suggestions = [
    ["pt", "L (LINE)"], ["layer", "LA (LAYER)"], ["dist", "LENGTH (DIST)"], ["xline", "LAYOUTLINE (XLINE)"],
    ["list", "LI (LIST)"], ["layiso", "LAYISO"], ["layfrz", "LAYFRZ"],
];

function TitleBar() {
    return (
        <Header>
            <AppButton aria-label="Application menu">
                <svg width="20" height="20" viewBox="0 0 20 20">
                    <path d="M1 18L7 2h6l6 16h-5l-4-5-5 5z" fill="#c61c21" />
                    <path d="M7 2h3l-1 9-8 7z" fill="#e5383c" />
                    <path d="M10 7l2 5H8z" fill="#7d0d11" />
                </svg>
                <Caret $s={3} $c="#222" />
            </AppButton>
            <TitleRow>
                <QuickAccess>
                    {["fresh", "open", "save", "saveAs", "print", "undo"].map((n) => (
                        <IconButton key={n} aria-label={n}><Icon name={n} /></IconButton>
                    ))}
                    <Caret $s={2} />
                    <IconButton aria-label="redo"><Icon name="redo" /></IconButton>
                    <Caret $s={2} />
                    <IconButton aria-label="customize"><Icon name="qat" /></IconButton>
                </QuickAccess>
                <Title><span>Autodesk AutoCAD 2016</span><span>Drawing1.dwg</span></Title>
                <InfoCenter>
                    <SearchArrow aria-label="Collapse">▶</SearchArrow>
                    <Search placeholder="Type a keyword or phrase" aria-label="Search" />
                    <IconButton aria-label="Find"><Icon name="binoc" /></IconButton>
                    <SignIn><Icon name="person" />Sign In<Caret $s={2} /></SignIn>
                    <InfoLinks>
                        <IconButton aria-label="Exchange"><Icon name="exchange" /></IconButton>
                        <IconButton aria-label="A360"><Icon name="a360" /></IconButton>
                        <Caret $s={2} />
                        <Divider />
                        <IconButton aria-label="Help"><Icon name="help" /></IconButton>
                        <Caret $s={2} />
                    </InfoLinks>
                </InfoCenter>
                <WindowButtons>
                    {["min", "restore", "close"].map((n) => (
                        <IconButton key={n} aria-label={n}><Icon name={n} /></IconButton>
                    ))}
                </WindowButtons>
            </TitleRow>
            <Menu>
                {menu.map(([label, w], i) => <MenuTab key={label} $w={w} $on={i === 0}>{label}</MenuTab>)}
                <MenuEnd aria-label="Minimize ribbon"><Pill><Caret $s={2} $c="#444" /></Pill><Caret $s={2} /></MenuEnd>
            </Menu>
        </Header>
    )
}

function RibbonBar() {
    return (
        <Ribbon>
            <Panel w={179} title="Draw">
                <Big w={29} icon="line" label="Line" />
                <Big w={40} icon="polyline" label="Polyline" />
                <Big w={40} icon="circle" label="Circle" menu />
                <Big w={33} icon="arc" label="Arc" menu />
                <Column $pad={3}>
                    <Small icon="rect" menu />
                    <Small icon="ellipse" menu />
                    <Small icon="hatch" menu />
                </Column>
            </Panel>
            <Panel w={200} title="Modify">
                <Column $w={60} $pad={2}>
                    <Small icon="move" label="Move" />
                    <Small icon="copy" label="Copy" />
                    <Small icon="stretch" label="Stretch" />
                </Column>
                <Column $w={55}>
                    <Small icon="rotate" label="Rotate" />
                    <Small icon="mirror" label="Mirror" />
                    <Small icon="scale" label="Scale" />
                </Column>
                <Column $w={61}>
                    <Small icon="trim" label="Trim" menu />
                    <Small icon="fillet" label="Fillet" menu />
                    <Small icon="array" label="Array" menu />
                </Column>
                <Column>
                    <Small icon="erase" />
                    <Small icon="explode" />
                    <Small icon="offset" />
                </Column>
            </Panel>
            <Panel w={151} title="Annotation">
                <Big w={34} icon="text" label="Text" menu />
                <Big w={50} icon="dimension" label="Dimension" />
                <Column $pad={3}>
                    <Small icon="linear" label="Linear" menu />
                    <Small icon="leader" label="Leader" menu />
                    <Small icon="table" label="Table" />
                </Column>
            </Panel>
            <Panel w={219} title="Layers">
                <Big w={48} icon="layerProps" label={"Layer\nProperties"} />
                <Column $grow>
                    <ToolRow>
                        <Combo
                            label="Layer"
                            options={["0"]}
                            swatch={[11, 11]}
                            lead={<><Icon name="bulb" /><Icon name="sun" /><Icon name="lock" /></>}
                        />
                    </ToolRow>
                    <ToolRow $pad={3}>
                        {["lay1", "lay2", "lay3", "lay4"].map((n) => <Small key={n} icon={n} />)}
                        <Small icon="lay5" label="Make Current" />
                    </ToolRow>
                    <ToolRow $pad={3}>
                        {["lay6", "lay7", "lay8", "lay9"].map((n) => <Small key={n} icon={n} />)}
                        <Small icon="lay10" label="Match Layer" />
                    </ToolRow>
                </Column>
            </Panel>
            <Panel w={86} title="Block">
                <Big w={29} icon="insert" label="Insert" />
                <Column $pad={3}>
                    <Small icon="create" label="Create" />
                    <Small icon="edit" label="Edit" />
                    <Small icon="attr" menu />
                </Column>
            </Panel>
            <Panel w={177} title="Properties" launch>
                <Big w={46} icon="match" label={"Match\nProperties"} />
                <Column $grow $pad={1}>
                    <ToolRow $gap={3}><Icon name="wheel" /><Combo label="Object color" options={["ByLayer"]} swatch={[13, 13]} pad={9} inset={4} /></ToolRow>
                    <ToolRow $gap={3}><Icon name="weight" /><Combo label="Lineweight" options={["ByLayer"]} swatch={[48, 1]} pad={5} inset={1} /></ToolRow>
                    <ToolRow $gap={3}><Icon name="ltype" /><Combo label="Linetype" options={["ByLayer"]} swatch={[48, 1]} pad={5} inset={1} /></ToolRow>
                </Column>
            </Panel>
            <Panel w={56} title="Groups">
                <Big w={32} icon="group" label="Group" />
                <Column $pad={1}>
                    <Small icon="ungroup" />
                    <Small icon="groupEdit" />
                    <Small icon="groupSel" active />
                </Column>
            </Panel>
            <Panel w={77} title="Utilities">
                <Big w={53} icon="measure" label="Measure" menu />
                <Column $pad={3}>
                    <Small icon="quick" />
                    <Small icon="point" />
                    <Small icon="calc" />
                </Column>
            </Panel>
            <Panel w={64} title="Clipboard" menu={false}>
                <Big w={40} icon="paste" label="Paste" menu />
                <Column $pad={3}>
                    <Small icon="cut" />
                    <Small icon="copyClip" />
                </Column>
            </Panel>
            <Panel w={50} title="View" launch>
                <Big w={46} icon="base" label="Base" menu />
            </Panel>
        </Ribbon>
    )
}

function DrawingArea() {
    return (
        <Workspace>
            <Canvas>
                <ViewBar>
                    <span>[−][Top][2D Wireframe]</span>
                    <div>
                        <svg width="14" height="14"><path d="M3 9h8" stroke="#fff" strokeWidth="2" /></svg>
                        <svg width="14" height="14"><path d="M3 6h5v5H3zM5 5V3h6v6H9" fill="none" stroke="#fff" strokeWidth="1.400" /></svg>
                        <svg width="14" height="14"><path d="M4 4l6 6M10 4l-6 6" stroke="#fff" strokeWidth="1.800" /></svg>
                    </div>
                </ViewBar>
                <Drawing $x={410} $y={138} width="250" height="180">
                    <defs>
                        <radialGradient id="halo">
                            <stop offset=".9" stopColor="#8f9120" />
                            <stop offset="1" stopColor="#8f9120" stopOpacity="0" />
                        </radialGradient>
                    </defs>
                    <circle cx="41" cy="42" r="36" fill="url(#halo)" />
                    <path d="M30 78L241 171" stroke="#c9ccd2" strokeWidth="1.200" />
                    <path d="M38.500 15v29M38.500 50v29M6 47.500h29M42 47.500h29" stroke="#f0f08c" />
                    <path d="M36 45h5v5h-5z" fill="none" stroke="#f0f08c" />
                    <path d="M41 40v15l3.500-3 2.500 5 2.500-1-2.500-5h5z" fill="#fff" stroke="#555" strokeWidth=".7" />
                </Drawing>
                <DynamicInput defaultValue="L" aria-label="Dynamic input" />
                <Suggest>
                    <Options role="listbox" aria-label="Commands">
                        {suggestions.map(([icon, label], i) => (
                            <Option key={label} role="option" aria-selected={i === 0} $on={i === 0} $even={i % 2 === 0 && i > 0}>
                                <Icon name={icon} />
                                <span>{label}</span>
                            </Option>
                        ))}
                    </Options>
                    <ScrollTrack>
                        <svg width="14" height="14"><path d="M4 9l3-3 3 3" fill="none" stroke="#444" strokeWidth="1.500" /></svg>
                        <i />
                        <svg width="14" height="14"><path d="M4 6l3 3 3-3" fill="none" stroke="#444" strokeWidth="1.500" /></svg>
                    </ScrollTrack>
                </Suggest>
                <Compass width="100" height="106" fontFamily="Liberation Sans" fontSize="15" fontWeight="700" fill="#b9bbc0" textAnchor="middle">
                    <circle cx="51" cy="52" r="40" fill="none" stroke="#434751" strokeWidth="9" />
                    <path d="M32 33h38v38H32z" fill="#b4b4b4" />
                    <path d="M39 40h24v24H39z" fill="#a2a4a8" />
                    <text x="51" y="56" fontSize="9" fontFamily="Open Sans" fill="#3b3d45">TOP</text>
                    <text x="51" y="17">N</text>
                    <text x="51" y="100">S</text>
                    <text x="9" y="58">W</text>
                    <text x="93" y="58">E</text>
                </Compass>
                <Wcs>WCS</Wcs>
                <NavBar width="26" height="170" fill="none" stroke="#464a52" strokeWidth="1.100">
                    <rect x=".5" y=".5" width="25" height="169" rx="3" fill="#5b5e67" stroke="#6d7079" strokeWidth="1" />
                    <circle cx="20" cy="4" r="2" />
                    <circle cx="13" cy="23" r="8" /><rect x="7" y="17" width="12" height="12" rx="3" /><rect x="10" y="20" width="6" height="6" />
                    <path d="M12 40l1 1 1-1M12 96l1 1 1-1M12 126l1 1 1-1" />
                    <path d="M9 66l-4-7q1-2 4 1l-1-8q1-2 3 0l1 4v-6q2-1 3 0v6l2-5q2 0 2 2l-1 5 2-3q2 1 1 3l-2 8z" />
                    <path d="M5 73l12 12M17 73L5 85" /><circle cx="17" cy="84" r="3.500" /><path d="M19 87l3 3" strokeWidth="2" />
                    <ellipse cx="13" cy="112" rx="8" ry="3.500" /><path d="M11 104h4v15h-4zM10 107l3-4 3 4" />
                    <path d="M4 136h18v5H4zM10 136v5M16 136v5M5 144h12v10H5z" /><path d="M9 146l5 3-5 3z" fill="#464a52" />
                    <circle cx="20" cy="165" r="2" />
                </NavBar>
                <Ucs width="64" height="64" fill="none" stroke="#d2d4d8">
                    <path d="M5.500 14v35M10 53.500h36M1 49h9v9H1zM6 49v5h4" />
                    <path d="M6 1l5 5 5-5M11 6v6M49 43l10 10M59 43L49 53" strokeWidth="1.300" />
                </Ucs>
                <CommandArea>
                    <History $old>Specify next point or [Undo]:</History>
                    <History>Command: Specify opposite corner or [Fence/WPolygon/CPolygon]: *Cancel*</History>
                    <CommandLine>
                        <Grip />
                        <IconButton type="button" aria-label="Close"><svg width="10" height="10"><path d="M1 1l7 7M8 1L1 8" stroke="#ddd" strokeWidth="1.500" /></svg></IconButton>
                        <IconButton type="button" aria-label="Customize"><svg width="12" height="12"><path d="M1 3a3 3 0 0 0 4 3l5 5 1.500-1.500-5-5A3 3 0 0 0 3 1l1.500 2L3 4.500z" fill="#ddd" /></svg></IconButton>
                        <Prompt>
                            <svg width="12" height="12"><rect x=".5" y=".5" width="11" height="11" fill="#888b94" stroke="#666" /><path d="M2 3l3 3-3 3M6 9h4" stroke="#eee" fill="none" /></svg>
                            <Caret $s={2} $c="#555" />
                            <input placeholder="Type a command" aria-label="Command" />
                            <svg width="6" height="4"><path d="M0 4l3-4 3 4z" fill="#222" /></svg>
                        </Prompt>
                    </CommandLine>
                </CommandArea>
            </Canvas>
            <Edge />
        </Workspace>
    )
}

function Status() {
    return (
        <StatusBar>
            <LayoutTabs>
                <LayoutTab $w={49} $on>Model</LayoutTab>
                <LayoutTab $w={50}>Layout1</LayoutTab>
                <LayoutTab $w={53}>Layout2</LayoutTab>
                <LayoutTab $w={22} aria-label="New layout"><svg width="8" height="8"><path d="M4 1v6M1 4h6" stroke="#ddd" strokeWidth="1.500" /></svg></LayoutTab>
            </LayoutTabs>
            <StatusTools>
                <Cell $w={121} $dim $size={10}>36.8046, 33.6612, 0.0000</Cell>
                <Cell $w={40}>MODEL</Cell>
                {cells.map((c) => <StatusCell key={c[1]} cell={c} />)}
            </StatusTools>
        </StatusBar>
    )
}

function WindowsBar() {
    return (
        <Taskbar>
            {tasks.map(({ name, art, open, on }) => (
                <Task key={name} aria-label={name} $open={open} $on={on}>
                    <TaskSvg viewBox="0 0 20 20">{art}</TaskSvg>
                </Task>
            ))}
            <Tray>
                <svg width="14" height="14"><path d="M3 9l4-4 4 4" fill="none" stroke="#eee" strokeWidth="1.300" /></svg>
                <svg width="14" height="14"><path d="M1 2h3v3H1zM3 5v7h3M5 3h8v7H6z" fill="none" stroke="#ddd" /><circle cx="9" cy="10" r="4" fill="#d5283a" /><path d="M7.500 8.500l3 3M10.500 8.500l-3 3" stroke="#fff" /></svg>
                <svg width="14" height="14"><path d="M1 5h2l3-3v10L3 9H1zM8 5q1 2 0 4M10 3q2.500 4 0 8M12 2q3 5 0 10" fill="none" stroke="#eee" /></svg>
                <svg width="14" height="14"><path d="M1 1h12v9H9l-2 3v-3H1z" fill="#fff" /><path d="M3 3.500h8M3 5.500h8M3 7.500h5" stroke="#222" strokeWidth=".8" /></svg>
                <Clock>1:01 PM<br />8/8/2024</Clock>
            </Tray>
        </Taskbar>
    )
}

function App() {
    return (
        <Page>
            <GlobalStyle />
            <TitleBar />
            <RibbonBar />
            <FileTabs>
                <FileTab $w={102}>Start</FileTab>
                <FileTab $w={101} $pad={8} $on>Drawing1*<svg width="8" height="8"><path d="M1 1l6 6M7 1L1 7" stroke="#999" strokeWidth="1.500" /></svg></FileTab>
                <FileTab $w={22} $pad={7} aria-label="New tab"><svg width="8" height="8"><path d="M4 0v8M0 4h8" stroke="#ddd" strokeWidth="1.500" /></svg></FileTab>
            </FileTabs>
            <DrawingArea />
            <Status />
            <WindowsBar />
        </Page>
    )
}

export default App
